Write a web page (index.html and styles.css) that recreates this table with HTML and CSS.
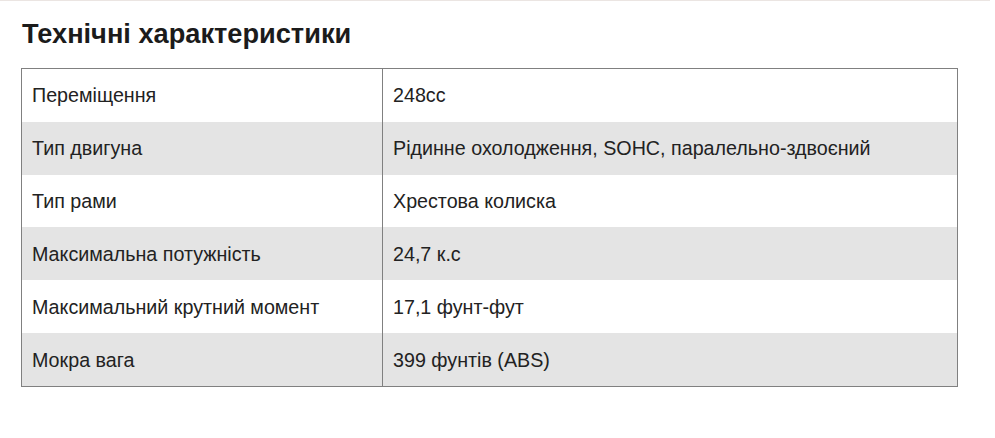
FILE: index.html
```html
<!DOCTYPE html>
<html lang="uk">
<head>
<meta charset="utf-8">
<link rel="stylesheet" href="styles.css">
</head>
<body>
<div class="topline"></div>
<section class="specs">
  <h2 class="specs-title">Технічні характеристики</h2>
  <table class="specs-table">
    <colgroup><col class="col-name"><col class="col-value"></colgroup>
    <tbody>
      <tr><td>Переміщення</td><td>248cc</td></tr>
      <tr><td>Тип двигуна</td><td>Рідинне охолодження, SOHC, паралельно-здвоєний</td></tr>
      <tr><td>Тип рами</td><td>Хрестова колиска</td></tr>
      <tr><td>Максимальна потужність</td><td>24,7 к.с</td></tr>
      <tr><td>Максимальний крутний момент</td><td>17,1 фунт-фут</td></tr>
      <tr><td>Мокра вага</td><td>399 фунтів (ABS)</td></tr>
    </tbody>
  </table>
</section>
</body>
</html>
```
FILE: styles.css
```css
html, body {
  margin: 0;
  padding: 0;
  background: #ffffff;
}
body {
  font-family: "Liberation Sans", Arial, sans-serif;
  color: #222222;
}
.topline {
  height: 1px;
  width: 990px;
  background: #ebe5e2;
}
.specs {
  padding: 0 37px 0 21px;
}
.specs-title {
  margin: 0;
  padding: 17px 0 0 1px;
  font-size: 27.2px;
  line-height: 32px;
  font-weight: 700;
  color: #1b1b1b;
}
.specs-table {
  margin-top: 18px;
  width: 937px;
  border-collapse: collapse;
  border: 1px solid #808080;
  font-size: 19.7px;
}
.col-name { width: 361px; }
.specs-table td {
  height: 52.83px;
  padding: 0 10px;
  vertical-align: middle;
  line-height: 22px;
}
.specs-table td + td {
  border-left: 1px solid #808080;
}
.specs-table tr:nth-child(even) td {
  background: #e4e4e4;
}
```
